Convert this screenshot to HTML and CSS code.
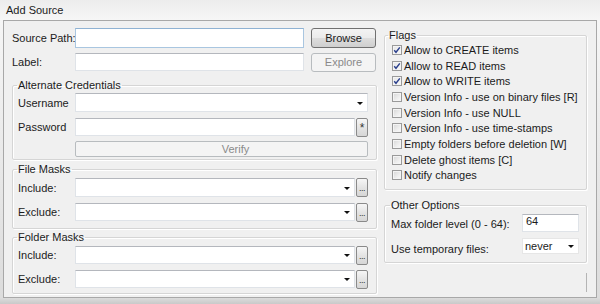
FILE: index.html
```html
<!DOCTYPE html>
<html lang="en">
<head>
  <meta charset="UTF-8" />
  <title>Add Source</title>
  <link rel="stylesheet" href="styles.css">
</head>
<body>

  <div class="titlebar">Add Source</div>

  <div class="window">
    <div class="left">
      <div class="row row-path">
        <label class="lbl">Source Path:</label>
        <div class="text focus"></div>
        <button class="btn">Browse</button>
      </div>
      <div class="row row-label">
        <label class="lbl">Label:</label>
        <div class="text"></div>
        <button class="btn" disabled>Explore</button>
      </div>

      <fieldset class="group creds">
        <legend>Alternate Credentials</legend>
        <div class="row r-user">
          <label class="lbl">Username</label>
          <div class="text combo wide"><span class="arrow"></span></div>
        </div>
        <div class="row r-pass">
          <label class="lbl">Password</label>
          <div class="text"></div>
          <button class="mini star">*</button>
        </div>
        <div class="row r-verify">
          <button class="btn verify" disabled>Verify</button>
        </div>
      </fieldset>

      <fieldset class="group masks files">
        <legend>File Masks</legend>
        <div class="row">
          <label class="lbl">Include:</label>
          <div class="text combo"><span class="arrow"></span></div>
          <button class="mini dots">...</button>
        </div>
        <div class="row">
          <label class="lbl">Exclude:</label>
          <div class="text combo"><span class="arrow"></span></div>
          <button class="mini dots">...</button>
        </div>
      </fieldset>

      <fieldset class="group masks folders">
        <legend>Folder Masks</legend>
        <div class="row">
          <label class="lbl">Include:</label>
          <div class="text combo"><span class="arrow"></span></div>
          <button class="mini dots">...</button>
        </div>
        <div class="row">
          <label class="lbl">Exclude:</label>
          <div class="text combo"><span class="arrow"></span></div>
          <button class="mini dots">...</button>
        </div>
      </fieldset>
    </div>

    <div class="right">
      <fieldset class="group flags">
        <legend>Flags</legend>
        <ul class="checklist">
          <li><span class="cb on"><svg viewBox="0 0 8 8"><path d="M1.2 4.2 L3 6.3 L6.8 1.4" /></svg></span>Allow to CREATE items</li>
          <li><span class="cb on"><svg viewBox="0 0 8 8"><path d="M1.2 4.2 L3 6.3 L6.8 1.4" /></svg></span>Allow to READ items</li>
          <li><span class="cb on"><svg viewBox="0 0 8 8"><path d="M1.2 4.2 L3 6.3 L6.8 1.4" /></svg></span>Allow to WRITE items</li>
          <li><span class="cb"></span>Version Info - use on binary files [R]</li>
          <li><span class="cb"></span>Version Info - use NULL</li>
          <li><span class="cb"></span>Version Info - use time-stamps</li>
          <li><span class="cb"></span>Empty folders before deletion [W]</li>
          <li><span class="cb"></span>Delete ghost items [C]</li>
          <li><span class="cb"></span>Notify changes</li>
        </ul>
      </fieldset>

      <fieldset class="group other">
        <legend>Other Options</legend>
        <div class="opt opt-max">
          <label class="olbl">Max folder level (0 - 64):</label>
          <div class="text num">64</div>
        </div>
        <div class="opt opt-temp">
          <label class="olbl">Use temporary files:</label>
          <div class="text select">never<span class="arrow"></span></div>
        </div>
      </fieldset>

      <div class="grip"></div>
    </div>
  </div>

</body>
</html>
```

FILE: styles.css
```css
* {
  margin: 0; padding: 0; box-sizing: border-box;
}
html, body {
  width: 600px; height: 304px; overflow: hidden;
}
body {
  background: linear-gradient(#ececec, #f6f6f6 20px, #dcdcdc 298px, #c9c9c9);
  font-family: "Liberation Sans", Arial, sans-serif;
  font-size: 11px;
  color: #1b1b1b;
}

.titlebar {
  height: 20px; line-height: 21px;
  padding-left: 6px;
}

.window {
  margin: 0 3px; width: 594px; height: 278px;
  border: 1px solid #a8a8a8;
  background: #f0f0f0;
  display: flex; gap: 7px;
  padding: 7px 9px 0 8px;
}

.left { width: 365px; display: flex; flex-direction: column; }
.right { width: 203px; display: flex; flex-direction: column; position: relative; }

.row { display: flex; align-items: center; }
.lbl { width: 63px; flex-shrink: 0; white-space: nowrap; }

/* text boxes */
.text {
  height: 100%; flex: 1;
  background: #fff;
  border: 1px solid #dfe3e8; border-top-color: #b4b7bd;
  position: relative;
}
.text.focus { border-color: #a9c6e0; border-top-color: #8fb2d3; }

.row-path { height: 20px; }
.row-path .text { flex: 0 0 229px; }
.row-label { height: 18px; margin-top: 5px; }
.row-label .text { flex: 0 0 229px; }

.btn {
  font: inherit;
  height: 20px; width: 65px; margin-left: 7px;
  border: 1px solid #707070; border-radius: 3px;
  background: linear-gradient(#f3f3f3, #ebebeb 50%, #dddddd 51%, #cfcfcf);
  color: #1b1b1b;
}
.row-label .btn { height: 19px; }
.btn:disabled {
  border-color: #b8bcbf;
  background: #f4f4f4;
  color: #8a8a8a;
}

/* group boxes */
.group {
  border: 1px solid #d5d5d5;
  border-radius: 2px;
  box-shadow: inset 1px 1px 0 #fff, 1px 1px 0 #fff;
  padding: 0 8px 0 5px;
}
.group legend { line-height: 13px; padding: 0 1px; margin-left: -1px; }
.group .lbl { width: 57px; }

.creds { margin-top: 8px; padding-top: 1px; padding-bottom: 2px; }
.creds .row { height: 18px; }
.creds .r-user { height: 19px; }
.creds .r-pass { margin-top: 6px; }
.creds .r-verify { margin-top: 5px; height: 16px; }

.verify {
  width: 293px; height: 16px; margin-left: 57px;
  border-radius: 2px;
  padding-left: 28px;
}

.mini {
  font: inherit;
  width: 12px; height: 19px; margin-left: 1px; flex-shrink: 0;
  border: 1px solid #8a8a8a; border-radius: 2px;
  background: linear-gradient(#f6f6f6, #e4e4e4 50%, #d6d6d6);
  color: #333;
  display: flex; justify-content: center;
}
.mini.star { font-size: 12px; line-height: 12px; padding-top: 3px; }
.mini.dots {
  font-size: 9px; line-height: 9px; letter-spacing: -0.5px;
  align-items: flex-end; padding-bottom: 3px;
}

.arrow {
  position: absolute; right: 4px; top: 50%; margin-top: -1px;
  border-left: 3px solid transparent; border-right: 3px solid transparent;
  border-top: 3px solid #111;
}

.masks .row { height: 18px; }
.masks .row + .row { margin-top: 6px; }
.files { margin-top: 3px; padding-top: 2px; padding-bottom: 7px; }
.files .row:first-of-type { height: 19px; }
.folders { margin-top: 2px; padding-top: 2px; padding-bottom: 5px; }

/* flags */
.flags { margin-top: 1px; padding: 0 4px 6px 4px; }
.checklist { list-style: none; padding-left: 3px; }
.checklist li {
  height: 15.7px;
  display: flex; align-items: center;
  white-space: nowrap;
}
.cb {
  width: 10px; height: 10px; margin-right: 2px; flex-shrink: 0;
  border: 1px solid #9a9a9a;
  background: linear-gradient(135deg, #d6d6d6, #eeeeee 60%, #fafafa);
  box-shadow: inset 0 0 0 1px #f4f4f4;
}
.cb.on { background: linear-gradient(135deg, #e6e6e6, #f8f8f8); }
.cb svg { width: 8px; height: 8px; display: block; }
.cb svg path { fill: none; stroke: #2a3f8c; stroke-width: 1.4; }

/* other options */
.other { margin-top: 9px; padding: 0 7px 8px 6px; }
.opt { display: flex; align-items: center; }
.olbl { width: 131px; flex-shrink: 0; white-space: nowrap; }
.opt-max { margin-top: 2px; height: 18px; }
.opt-max .olbl { margin-top: 2px; }
.num { padding-left: 3px; line-height: 13px; }
.opt-temp { margin-top: 6px; height: 16px; }
.opt-temp .olbl { margin-top: 5px; }
.select { padding-left: 2px; line-height: 14px; border-color: #e6e6e6; }

.grip {
  position: absolute; right: 0; top: 245px;
  width: 1px; height: 19px;
  background: #b4b4b4;
}
```
